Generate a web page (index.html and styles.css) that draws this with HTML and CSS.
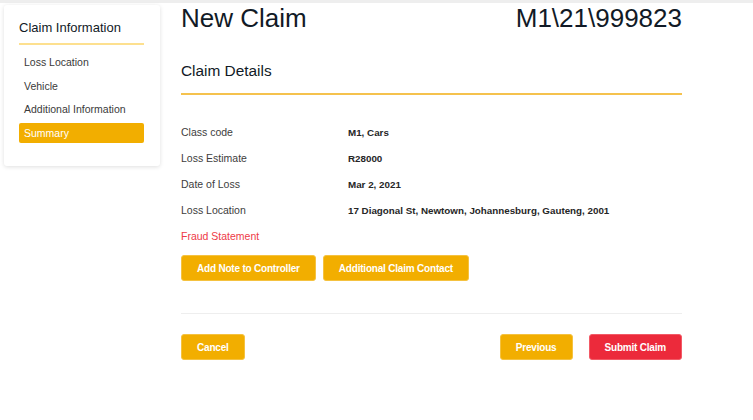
FILE: index.html
```html
<!DOCTYPE html>
<html>
<head>
<meta charset="utf-8">
<link rel="stylesheet" href="styles.css">
</head>
<body>
<div class="topbar"></div>
<div class="layout">
  <aside class="sidebar">
    <div class="side-title">Claim Information</div>
    <ul class="side-list">
      <li class="side-item">Loss Location</li>
      <li class="side-item">Vehicle</li>
      <li class="side-item">Additional Information</li>
      <li class="side-item active">Summary</li>
    </ul>
  </aside>
  <main class="main">
    <div class="header">
      <h1 class="title">New Claim</h1>
      <div class="claim-no">M1\21\999823</div>
    </div>
    <h2 class="section-title">Claim Details</h2>
    <div class="details">
      <div class="row"><span class="label">Class code</span><span class="value">M1, Cars</span></div>
      <div class="row"><span class="label">Loss Estimate</span><span class="value">R28000</span></div>
      <div class="row"><span class="label">Date of Loss</span><span class="value">Mar 2, 2021</span></div>
      <div class="row"><span class="label">Loss Location</span><span class="value">17 Diagonal St, Newtown, Johannesburg, Gauteng, 2001</span></div>
      <div class="row"><span class="label fraud">Fraud Statement</span></div>
    </div>
    <div class="actions">
      <button class="btn">Add Note to Controller</button>
      <button class="btn">Additional Claim Contact</button>
    </div>
    <div class="footer">
      <button class="btn">Cancel</button>
      <div class="footer-right">
        <button class="btn">Previous</button>
        <button class="btn btn-red">Submit Claim</button>
      </div>
    </div>
  </main>
</div>
</body>
</html>
```
FILE: styles.css
```css
* { box-sizing: border-box; }
html, body { margin: 0; padding: 0; background: #fff; }
body {
  font-family: "Liberation Sans", Arial, sans-serif;
  color: #222;
  width: 753px;
  height: 420px;
  overflow: hidden;
}
.topbar {
  height: 3px;
  background: #eeeeee;
}
.layout {
  display: flex;
  align-items: flex-start;
}
.sidebar {
  width: 156px;
  margin: 2px 0 0 4px;
  padding: 14px 16px 23px 15px;
  background: #fff;
  border-radius: 3px;
  box-shadow: 0 1px 4px rgba(0,0,0,0.13);
}
.side-title {
  font-size: 13px;
  line-height: 18px;
  color: #111a26;
  padding-bottom: 6px;
  border-bottom: 2px solid #fde08f;
}
.side-list {
  list-style: none;
  margin: 7px 0 0;
  padding: 0;
  display: flex;
  flex-direction: column;
  gap: 3.5px;
}
.side-item {
  font-size: 10.5px;
  line-height: 20px;
  height: 20px;
  padding-left: 5px;
  color: #3a3a3a;
  border-radius: 2px;
}
.side-item.active {
  background: #f2ae00;
  color: #fff;
}
.main {
  width: 501px;
  margin-left: 21px;
}
.header {
  display: flex;
  justify-content: space-between;
  align-items: center;
  height: 30px;
}
.title, .claim-no {
  margin: 0;
  font-size: 26px;
  line-height: 30px;
  font-weight: normal;
  color: #111a26;
}
.section-title {
  margin: 28px 0 0;
  font-size: 15.4px;
  line-height: 20px;
  font-weight: normal;
  color: #111a26;
  padding-bottom: 12px;
  border-bottom: 2px solid #f5c24e;
}
.details {
  margin-top: 24px;
}
.row {
  display: flex;
  height: 26px;
  align-items: center;
}
.label {
  width: 167px;
  font-size: 10.5px;
  color: #3d3d3d;
}
.label.fraud {
  color: #ee3a47;
}
.value {
  font-size: 9.8px;
  font-weight: bold;
  color: #262626;
}
.actions {
  display: flex;
  gap: 7px;
  margin-top: 6px;
}
.btn {
  font-family: "Liberation Sans", Arial, sans-serif;
  height: 26px;
  padding: 0 15px;
  border: 1px solid #f5c240;
  border-radius: 3px;
  background: #f2ae00;
  color: #fff;
  font-size: 10px;
  font-weight: bold;
  letter-spacing: -0.2px;
  cursor: pointer;
}
.btn-red {
  background: #ec2a3b;
  border-color: #f25a66;
}
.footer {
  display: flex;
  justify-content: space-between;
  margin-top: 32px;
  padding-top: 20px;
  border-top: 1px solid #eeeeee;
}
.footer-right {
  display: flex;
  gap: 16px;
}
```
